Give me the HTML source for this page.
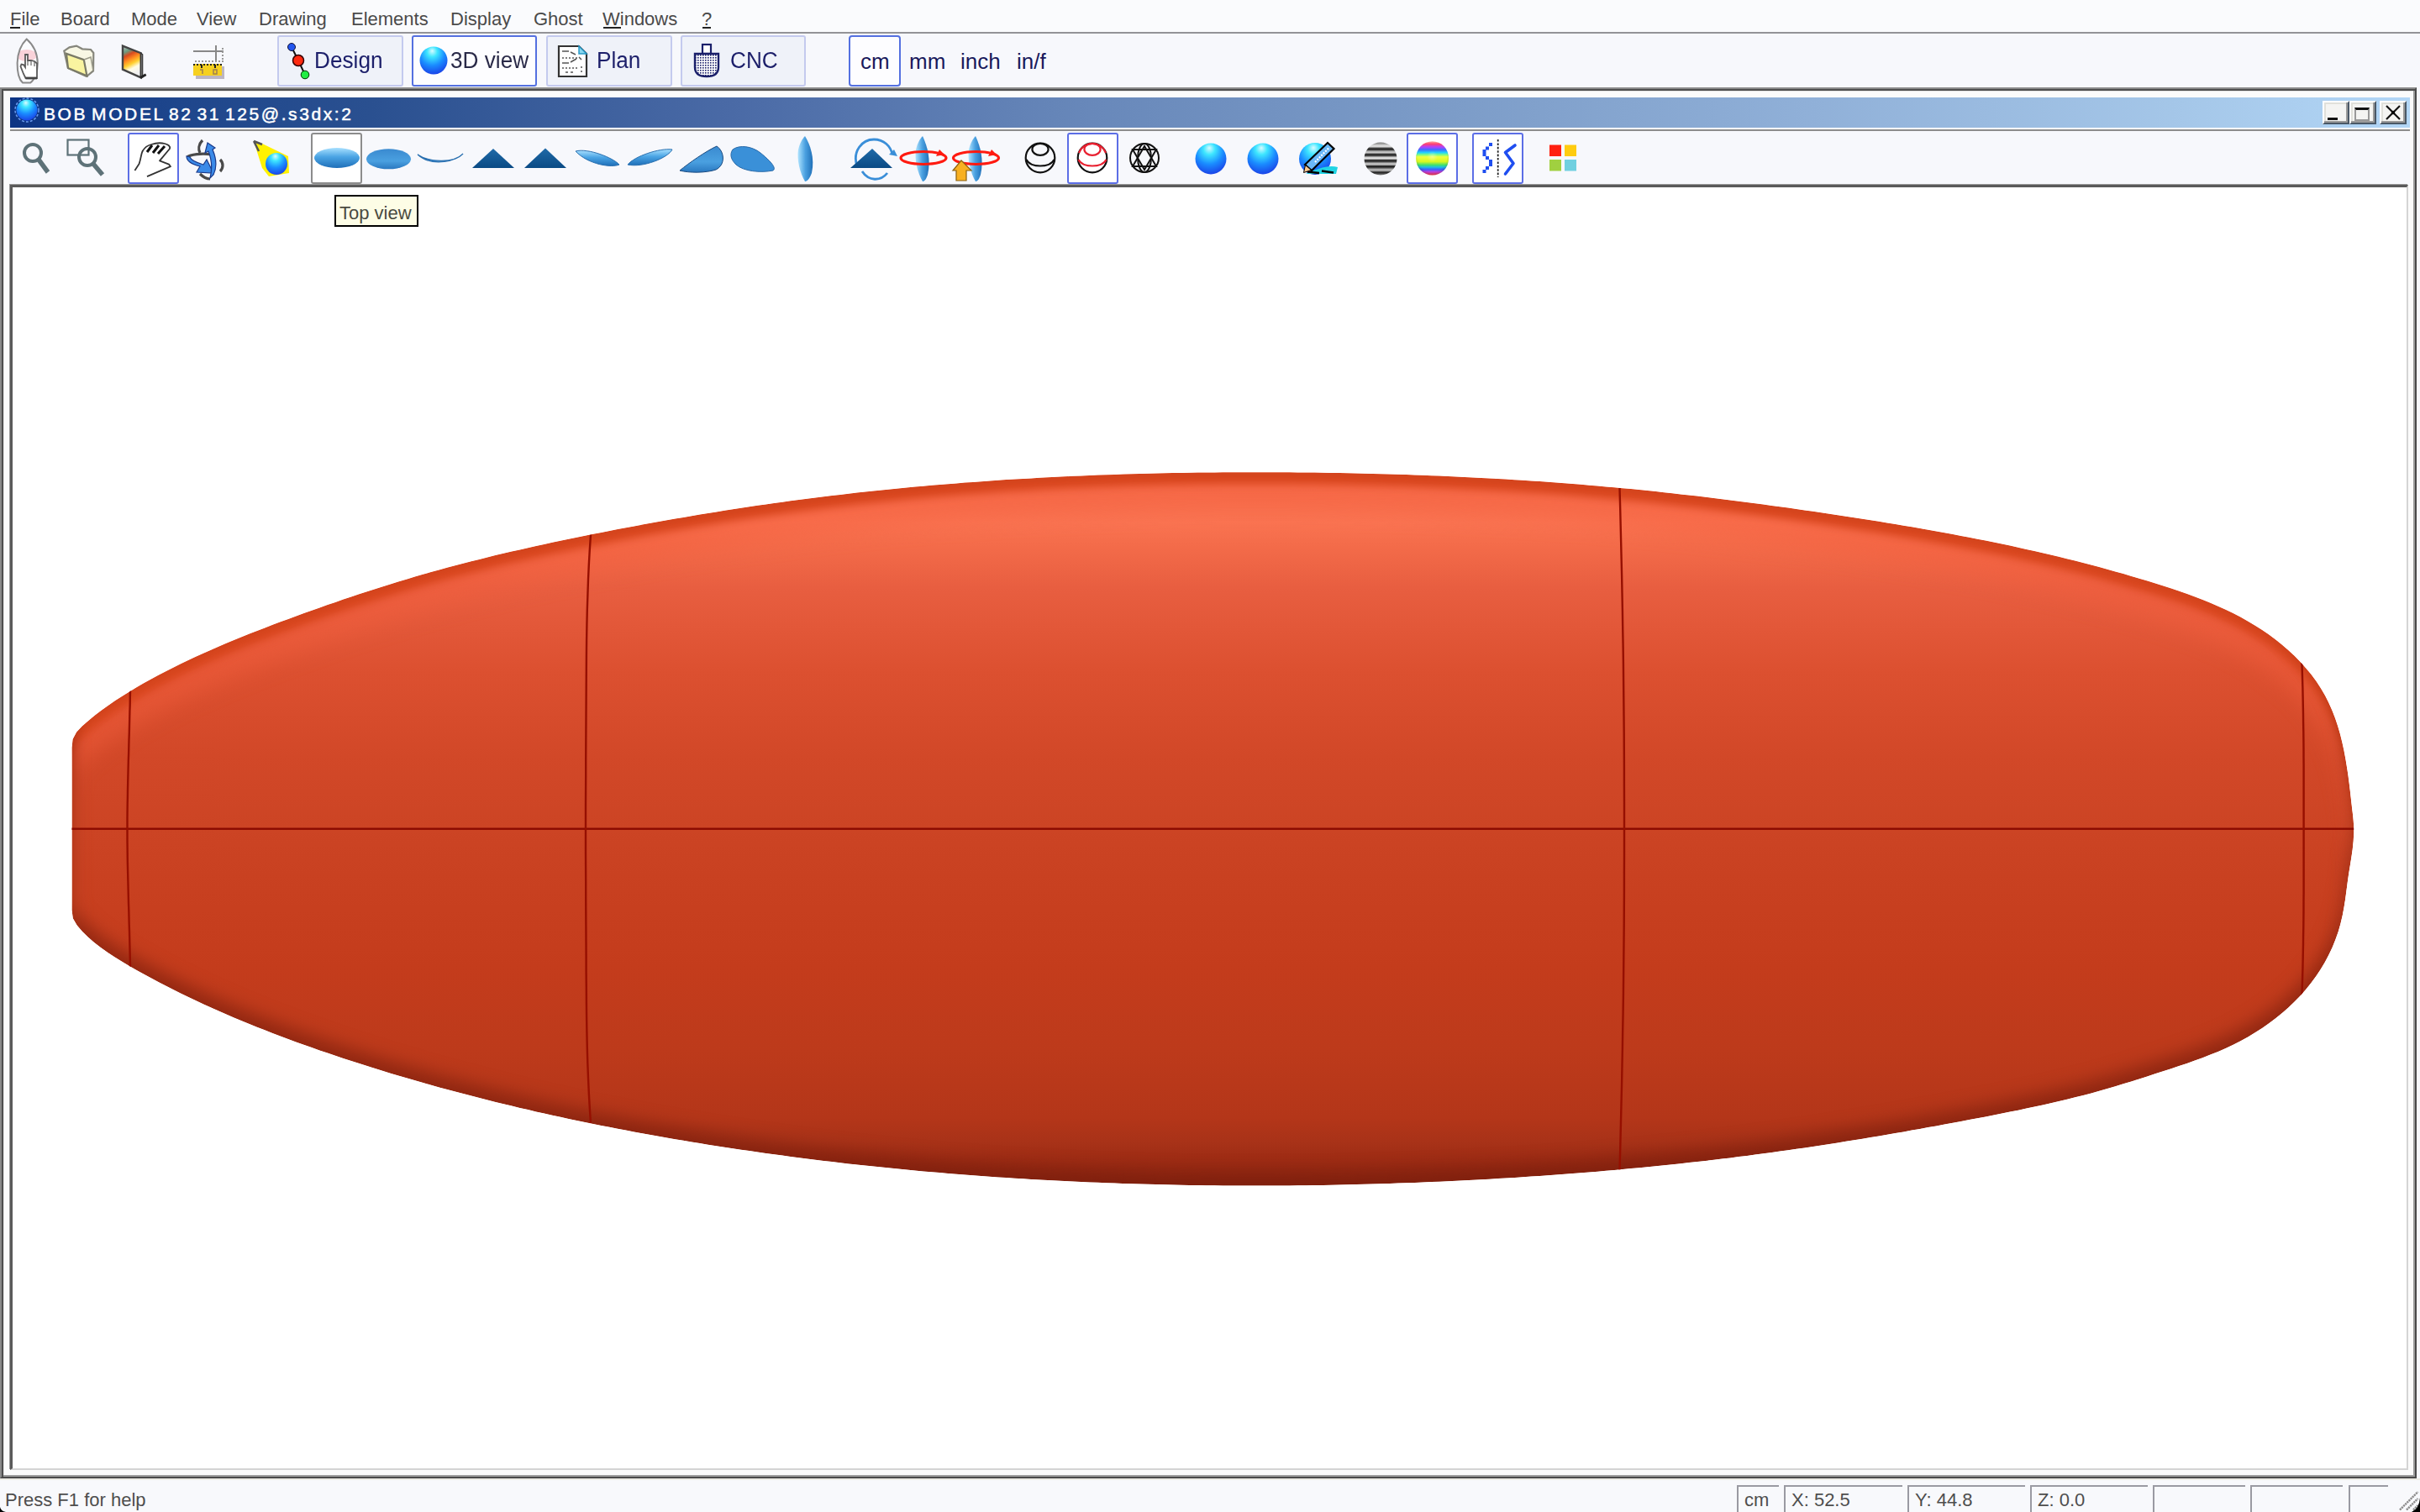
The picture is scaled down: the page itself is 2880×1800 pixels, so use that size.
<!DOCTYPE html>
<html><head><meta charset="utf-8"><style>
*{margin:0;padding:0;box-sizing:border-box}
html,body{width:2880px;height:1800px;overflow:hidden;background:#f7f8fc;font-family:"Liberation Sans",sans-serif;position:relative}
.a{position:absolute}
.t{position:absolute;white-space:nowrap;line-height:1}
</style></head>
<body>
<div class="a" style="left:0;top:0;width:2880px;height:38px;background:#fafbfd"></div>
<div class="a" style="left:0;top:38px;width:2880px;height:2px;background:#939397"></div>
<div class="t" style="left:12px;top:12px;font-size:22px;color:#4a4a4a">File</div>
<div class="t" style="left:72px;top:12px;font-size:22px;color:#4a4a4a">Board</div>
<div class="t" style="left:156px;top:12px;font-size:22px;color:#4a4a4a">Mode</div>
<div class="t" style="left:234px;top:12px;font-size:22px;color:#4a4a4a">View</div>
<div class="t" style="left:308px;top:12px;font-size:22px;color:#4a4a4a">Drawing</div>
<div class="t" style="left:418px;top:12px;font-size:22px;color:#4a4a4a">Elements</div>
<div class="t" style="left:536px;top:12px;font-size:22px;color:#4a4a4a">Display</div>
<div class="t" style="left:635px;top:12px;font-size:22px;color:#4a4a4a">Ghost</div>
<div class="t" style="left:717px;top:12px;font-size:22px;color:#4a4a4a">Windows</div>
<div class="t" style="left:835px;top:12px;font-size:22px;color:#4a4a4a">?</div>
<div class="a" style="left:12px;top:32px;width:12px;height:2px;background:#222"></div>
<div class="a" style="left:718px;top:32px;width:21px;height:2px;background:#222"></div>
<div class="a" style="left:836px;top:32px;width:10px;height:2px;background:#222"></div>
<div class="a" style="left:0;top:40px;width:2880px;height:64px;background:#f7f8fc"></div>
<svg class="a" style="left:12px;top:42px" width="42" height="62" viewBox="12 42 42 62">
<defs><clipPath id="bdc"><path d="M31.7 46.5 C26 52 21 62 20.6 75 C20.5 86 23 95 27 98.6 L36 98.6 C41 95 44.8 86 44.8 75 C44.5 62 38 52 31.7 46.5 Z"/></clipPath></defs>
<path d="M31.7 46.5 C26 52 21 62 20.6 75 C20.5 86 23 95 27 98.6 L36 98.6 C41 95 44.8 86 44.8 75 C44.5 62 38 52 31.7 46.5 Z" fill="#fbfcff"/>
<ellipse cx="31.7" cy="66" rx="12" ry="7" fill="#f8c4cc" opacity="0.75" clip-path="url(#bdc)"/>
<path d="M31.7 46.5 C26 52 21 62 20.6 75 C20.5 86 23 95 27 98.6 L36 98.6 C41 95 44.8 86 44.8 75 C44.5 62 38 52 31.7 46.5 Z" fill="none" stroke="#8a8a8a" stroke-width="2"/>
<path d="M30 65 L33 65 L33 72 L37 72 L41 73 L44 75.5 L44 93 L30.5 93 L28 88 L24.5 79 L25.5 76.5 L28 77 L30 80 Z" fill="#fff" stroke="#5a5a5a" stroke-width="1.8"/>
<path d="M30.5 93 L44 93" stroke="#444" stroke-width="2.8"/>
<path d="M33 72 L33 78 M37 72 L37 78 M41 73 L41 79" stroke="#666" stroke-width="1.2"/>
</svg>
<svg class="a" style="left:70px;top:48px" width="50" height="50" viewBox="0 0 50 50">
<path d="M6.3 12.6 L12.6 8.3 L21 6.6 L28 10.3 L38 11 L41.3 15 L41 36.4 L33 43 L11 33 Z" fill="#f8f7e4" stroke="#86867c" stroke-width="2.2"/>
<path d="M9 15.9 L29.8 23.1 L33.4 42.3 L11 33 Z" fill="#f9f4a0" stroke="#7a7a66" stroke-width="2.2"/>
<path d="M30 23 L38 20 L41 36" fill="none" stroke="#9a9a8a" stroke-width="1.5"/>
</svg>
<svg class="a" style="left:136px;top:48px" width="50" height="50" viewBox="0 0 50 50">
<defs><linearGradient id="fl" x1="0" y1="0" x2="0.3" y2="1"><stop offset="0" stop-color="#c8c8c8"/><stop offset="0.22" stop-color="#6a9a80"/><stop offset="0.35" stop-color="#d84a20"/><stop offset="0.5" stop-color="#ff8a20"/><stop offset="0.65" stop-color="#ffd030"/><stop offset="0.8" stop-color="#fffce8"/><stop offset="1" stop-color="#f0f0f0"/></linearGradient></defs>
<path d="M10 6.6 L31.7 15.2 L31.7 44.3 L10 34.7 Z" fill="url(#fl)" stroke="#444" stroke-width="2.4"/>
<path d="M31.7 15.2 L33.7 16.8 L33.7 44 L31.7 44.3Z" fill="#8a8a8a" stroke="#333" stroke-width="1.2"/>
<path d="M31 44.5 L37.7 40.7" stroke="#222" stroke-width="2.8"/>
</svg>
<svg class="a" style="left:226px;top:50px" width="46" height="48" viewBox="0 0 46 48">
<rect x="7" y="29" width="34" height="15" fill="#a8a0b0" opacity="0.75"/>
<rect x="4" y="26" width="34" height="14" fill="#f6d020"/>
<line x1="4" y1="11" x2="40" y2="11" stroke="#888" stroke-width="2"/>
<line x1="31" y1="4" x2="31" y2="23" stroke="#888" stroke-width="2"/>
<line x1="6" y1="23" x2="40" y2="23" stroke="#999" stroke-width="2" stroke-dasharray="2 2"/>
<line x1="39" y1="7" x2="39" y2="23" stroke="#999" stroke-width="2" stroke-dasharray="2 2"/>
<line x1="4" y1="27" x2="38" y2="27" stroke="#222" stroke-width="2" stroke-dasharray="2 2"/>
<rect x="13" y="27" width="2" height="4" fill="#222"/><rect x="29" y="27" width="2" height="4" fill="#222"/>
<path d="M12 33 h3 v5" fill="none" stroke="#a08050" stroke-width="1.5"/>
<rect x="28" y="33" width="4" height="5" fill="none" stroke="#a08050" stroke-width="1.5"/>
</svg>
<div class="a" style="left:330px;top:42px;width:150px;height:61px;border:2px solid #c4caee;border-radius:3px;background:#eff2f9"></div>
<div class="a" style="left:490px;top:42px;width:149px;height:61px;border:2px solid #5470e0;border-radius:3px;background:#fdfdff"></div>
<div class="a" style="left:650px;top:42px;width:150px;height:61px;border:2px solid #c4caee;border-radius:3px;background:#eff2f9"></div>
<div class="a" style="left:810px;top:42px;width:149px;height:61px;border:2px solid #c4caee;border-radius:3px;background:#eff2f9"></div>
<svg class="a" style="left:338px;top:48px" width="34" height="50" viewBox="0 0 34 50">
<path d="M9 8 L17 24 L25 41" fill="none" stroke="#111" stroke-width="2"/>
<circle cx="9" cy="8" r="4.5" fill="#2255ee" stroke="#113" stroke-width="1"/>
<circle cx="17" cy="24" r="6.5" fill="#ff2a10" stroke="#300" stroke-width="1.5"/>
<circle cx="25" cy="41" r="4.8" fill="#22ee44" stroke="#030" stroke-width="1"/>
</svg>
<div class="t" style="left:374px;top:59px;font-size:27px;color:#1c1f6a;transform-origin:0 0;transform:scaleX(0.97)">Design</div>
<svg class="a" style="left:498px;top:54px" width="36" height="36" viewBox="0 0 36 36"><defs><radialGradient id="s3d" cx="0.45" cy="0.28" r="0.75" fx="0.45" fy="0.15"><stop offset="0" stop-color="#d8fbff"/><stop offset="0.25" stop-color="#3ee6ff"/><stop offset="0.6" stop-color="#1a8cff"/><stop offset="1" stop-color="#1a3ee6"/></radialGradient></defs><circle cx="18" cy="18" r="16.5" fill="url(#s3d)"/></svg>
<div class="t" style="left:536px;top:59px;font-size:27px;color:#2a2a48;transform-origin:0 0;transform:scaleX(0.97)">3D view</div>
<svg class="a" style="left:662px;top:52px" width="40" height="42" viewBox="0 0 40 42">
<path d="M3 3 L27 3 L36 12 L36 39 L3 39 Z" fill="#fff" stroke="#333" stroke-width="2.2"/>
<path d="M27 3 L27 12 L36 12 Z" fill="#8ad8f0" stroke="#2a9ac8" stroke-width="1.5"/>
<path d="M7 9 h8 M17 10 l6 3 M7 17 h2 M11 17 h2 M15 17 h2 M19 17 h2 M23 17 h2 M27 16 l3 3 M7 23 h8 M17 22 l7 -4 M7 29 h2 M11 29 h2 M15 29 h2 M19 29 h2 M23 29 h2 M29 28 h2 M11 34 h3 M17 34 h3 M29 33 h2" stroke="#555" stroke-width="1.5" fill="none"/>
</svg>
<div class="t" style="left:710px;top:59px;font-size:27px;color:#1c1f6a;transform-origin:0 0;transform:scaleX(0.97)">Plan</div>
<svg class="a" style="left:824px;top:50px" width="34" height="44" viewBox="0 0 34 44">
<defs><pattern id="dots" width="3" height="3" patternUnits="userSpaceOnUse"><rect width="3" height="3" fill="#fff"/><rect width="1.6" height="1.6" fill="#1a1f6a"/></pattern></defs>
<rect x="12" y="3" width="10" height="11" fill="#fff" stroke="#1a1f6a" stroke-width="2.2"/>
<path d="M3 14 L31 14 L31 30 C31 38 26 41 17 41 C8 41 3 38 3 30 Z" fill="url(#dots)" stroke="#1a1f6a" stroke-width="2.4"/>
</svg>
<div class="t" style="left:869px;top:59px;font-size:27px;color:#1c1f6a;transform-origin:0 0;transform:scaleX(0.97)">CNC</div>
<div class="a" style="left:1010px;top:42px;width:62px;height:61px;border:2px solid #5470e0;border-radius:4px;background:#fdfdff"></div>
<div class="t" style="left:1024px;top:60px;font-size:26px;color:#1a1a5c">cm</div>
<div class="t" style="left:1082px;top:60px;font-size:26px;color:#1a1a5c">mm</div>
<div class="t" style="left:1143px;top:60px;font-size:26px;color:#1a1a5c">inch</div>
<div class="t" style="left:1210px;top:60px;font-size:26px;color:#1a1a5c">in/f</div>
<div class="a" style="left:0;top:104px;width:2876px;height:1656px;background:#fbfbfb;border:2px solid;border-color:#8a8a8a #4a4a4a #4a4a4a #8a8a8a;box-shadow:inset 2px 2px 0 #4e4e4e, inset -2px -2px 0 #9c9c9c, inset 3px 3px 0 #e6e6e6"></div>
<div class="a" style="left:12px;top:116px;width:2856px;height:36px;background:linear-gradient(90deg,#0c3484 0%,#1e468c 7%,#2a5090 15%,#4a6aa6 30%,#6888ba 45%,#7c9cc8 60%,#90b0d8 75%,#a4c6e8 90%,#b2d6f6 100%)"></div>
<div class="a" style="left:12px;top:154px;width:2856px;height:2px;background:#8c8c8c"></div>
<div class="a" style="left:12px;top:156px;width:2856px;height:64px;background:#f7f8fc"></div>
<div class="t" style="left:52px;top:125px;font-size:21px;color:#fff;letter-spacing:2.6px;word-spacing:-3.5px;-webkit-text-stroke:0.5px #fff">BOB MODEL 82 31 125@.s3dx:2</div>
<svg class="a" style="left:16px;top:116px" width="32" height="32" viewBox="0 0 32 32"><defs><radialGradient id="stt" cx="0.45" cy="0.28" r="0.75" fx="0.45" fy="0.15"><stop offset="0" stop-color="#d8fbff"/><stop offset="0.25" stop-color="#3ee6ff"/><stop offset="0.6" stop-color="#1a8cff"/><stop offset="1" stop-color="#1a3ee6"/></radialGradient></defs><circle cx="16" cy="15" r="14" fill="none" stroke="#6a9cf0" stroke-width="1.5" stroke-dasharray="3 2"/><circle cx="16" cy="15" r="12.5" fill="url(#stt)"/></svg>
<div class="a" style="left:2764px;top:120px;width:32px;height:28px;background:#f4f4f2;border-top:2px solid #fff;border-left:2px solid #fff;border-right:2px solid #4a5866;border-bottom:2px solid #4a5866;box-shadow:inset -2px -2px 0 #9a9a9a, inset 2px 2px 0 #e0e0da"></div>
<div class="a" style="left:2796px;top:120px;width:32px;height:28px;background:#f4f4f2;border-top:2px solid #fff;border-left:2px solid #fff;border-right:2px solid #4a5866;border-bottom:2px solid #4a5866;box-shadow:inset -2px -2px 0 #9a9a9a, inset 2px 2px 0 #e0e0da"></div>
<div class="a" style="left:2832px;top:120px;width:32px;height:28px;background:#f4f4f2;border-top:2px solid #fff;border-left:2px solid #fff;border-right:2px solid #4a5866;border-bottom:2px solid #4a5866;box-shadow:inset -2px -2px 0 #9a9a9a, inset 2px 2px 0 #e0e0da"></div>
<div class="a" style="left:2770px;top:140px;width:12px;height:2.5px;background:#111"></div>
<div class="a" style="left:2802px;top:128px;width:18px;height:16px;border:2px solid #999;border-top:3px solid #111"></div>
<svg class="a" style="left:2838px;top:124px" width="20" height="20" viewBox="0 0 20 20"><path d="M2 2 L18 18 M18 2 L2 18" stroke="#111" stroke-width="2.2"/><circle cx="10" cy="10" r="2.2" fill="#000"/></svg>
<div class="a" style="left:152px;top:158px;width:61px;height:61px;border:2px solid #5c6ee6;border-radius:3px;background:#fff"></div>
<div class="a" style="left:370px;top:158px;width:61px;height:61px;border:2px solid #8c8c8c;border-radius:3px;background:#fff"></div>
<div class="a" style="left:1270px;top:158px;width:61px;height:61px;border:2px solid #5c6ee6;border-radius:3px;background:#fff"></div>
<div class="a" style="left:1674px;top:158px;width:61px;height:61px;border:2px solid #5c6ee6;border-radius:3px;background:#fff"></div>
<div class="a" style="left:1752px;top:158px;width:61px;height:61px;border:2px solid #5c6ee6;border-radius:3px;background:#fff"></div>
<svg class="a" style="left:24px;top:168px" width="40" height="44" viewBox="0 0 40 44"><circle cx="15" cy="14" r="10" fill="none" stroke="#5e7278" stroke-width="4"/><path d="M22 22 L33 37" stroke="#5e7278" stroke-width="5.5" stroke-linecap="butt"/></svg>
<svg class="a" style="left:76px;top:162px" width="52" height="52" viewBox="0 0 52 52"><rect x="4.5" y="4.5" width="25" height="18" fill="none" stroke="#5e7278" stroke-width="2.2"/><circle cx="28" cy="25" r="10" fill="none" stroke="#5e7278" stroke-width="4"/><path d="M35 33 L46 46" stroke="#5e7278" stroke-width="5.5"/></svg>
<svg class="a" style="left:150px;top:156px" width="126" height="64" viewBox="150 156 126 64"><path d="M160.4 202.9 L165.6 195 C168 188 168 182 170 179.4 C172 176 176 173 180 172 C186 170 192 170 196 171 C200 172 203 174 202 177 L190 191.4 L201 195.6 L203 198.2 L175 210.2" fill="#fff" stroke="#333" stroke-width="1.8" stroke-linejoin="round"/><path d="M175 181 L181 173 M182 182 L189 173 M188 183 L196 174" stroke="#111" stroke-width="3"/></svg>
<svg class="a" style="left:216px;top:160px" width="60" height="60" viewBox="216 160 60 60"><g fill="none" stroke="#4a4a4a" stroke-width="3.2"><path d="M241 167 C236 172 236 178 238 182"/><path d="M223 187 C226 184 240 182 252 184"/><path d="M238 207 C242 211 246 213 250 213"/><path d="M262 190 C266 194 266 200 262 204"/></g><path d="M222 186 C222 193 230 196 238 198 L234 205 L254 206 L246 190 L242 196 C236 194 228 192 226 187 Z" fill="#3a8ae8" stroke="#1a3a8a" stroke-width="1.2"/><path d="M247 170 L256 176 L253 178 C258 190 258 200 254 208 L250 212 C253 200 252 190 248 180 L244 182 Z" fill="#3a8ae8" stroke="#1a3a8a" stroke-width="1.2"/></svg>
<svg class="a" style="left:298px;top:164px" width="50" height="50" viewBox="0 0 50 50"><defs><radialGradient id="slt" cx="0.45" cy="0.28" r="0.75" fx="0.45" fy="0.15"><stop offset="0" stop-color="#d8fbff"/><stop offset="0.25" stop-color="#3ee6ff"/><stop offset="0.6" stop-color="#1a8cff"/><stop offset="1" stop-color="#1a3ee6"/></radialGradient></defs><path d="M4 4 L12 6 L45 22 L46 42 L22 46 L14 36 Z" fill="#fff200"/><path d="M4 4 L10 16 M4 4 L14 8" stroke="#555" stroke-width="2.5"/><circle cx="31" cy="31" r="13" fill="url(#slt)"/></svg>
<svg class="a" style="left:360px;top:160px" width="640" height="60" viewBox="360 160 640 60"><defs><linearGradient id="bl1" x1="0" y1="0" x2="0" y2="1"><stop offset="0" stop-color="#a8e0ff"/><stop offset="0.45" stop-color="#4aa4e4"/><stop offset="1" stop-color="#1f6fb8"/></linearGradient><linearGradient id="bl2" x1="0" y1="0" x2="0" y2="1"><stop offset="0" stop-color="#3a8ad0"/><stop offset="0.6" stop-color="#4aa0e0"/><stop offset="1" stop-color="#2a78c0"/></linearGradient><linearGradient id="bld" x1="0" y1="0" x2="0" y2="1"><stop offset="0" stop-color="#1f6aa8"/><stop offset="1" stop-color="#0a4a84"/></linearGradient><linearGradient id="blv" x1="0" y1="0" x2="1" y2="0"><stop offset="0" stop-color="#b0e4ff"/><stop offset="0.5" stop-color="#4aa0e0"/><stop offset="1" stop-color="#2070b8"/></linearGradient></defs>
<ellipse cx="401" cy="188" rx="27" ry="12" fill="url(#bl1)"/>
<ellipse cx="462.5" cy="189.3" rx="26.5" ry="12" fill="url(#bl2)"/>
<path d="M497 184 C510 193 540 195 551 183 C545 191 515 200 497 184Z" fill="#3a8ad0" stroke="#2a70b0" stroke-width="1.2"/>
<path d="M562 200 L587 177 L612 200 Z" fill="url(#bld)"/>
<path d="M624 200 L649 176.5 L674 200 Z" fill="url(#bld)"/>
<path d="M685 180 C700 176 730 188 737 196 C728 200 700 196 685 180Z" fill="url(#bl1)" stroke="#2a70b0" stroke-width="1"/>
<path d="M747 196 C755 186 785 176 800 178 C795 188 765 200 747 196Z" fill="url(#bl1)" stroke="#2a70b0" stroke-width="1"/>
<path d="M809 203 C820 194 840 180 853 174 C862 180 864 196 852 202 C840 206 820 206 809 203Z" fill="url(#bl2)" stroke="#1a4a80" stroke-width="1"/>
<path d="M872 178 C880 172 895 174 905 182 C915 190 925 200 920 203 C905 206 885 204 876 196 C870 190 868 184 872 178Z" fill="#3a90d8" stroke="#2a6aa8" stroke-width="1"/>
<path d="M958 162 C964 172 970 188 966 206 C963 214 960 216 958 216 C952 206 948 190 950 178 C952 170 955 165 958 162Z" fill="url(#blv)"/>
</svg>
<svg class="a" style="left:1000px;top:160px" width="340" height="60" viewBox="1000 160 340 60"><defs><linearGradient id="bld2" x1="0" y1="0" x2="0" y2="1"><stop offset="0" stop-color="#1f6aa8"/><stop offset="1" stop-color="#0a4a84"/></linearGradient><linearGradient id="blv2" x1="0" y1="0" x2="1" y2="0"><stop offset="0" stop-color="#b0e4ff"/><stop offset="0.5" stop-color="#4aa0e0"/><stop offset="1" stop-color="#2070b8"/></linearGradient></defs>
<path d="M1020 198 C1014 180 1026 166 1040 166 C1052 166 1060 174 1062 184" fill="none" stroke="#3a8ed8" stroke-width="2.8"/>
<path d="M1058 184 L1064 178 L1068 186Z" fill="#3a8ed8"/>
<path d="M1026 204 C1034 216 1048 216 1056 206" fill="none" stroke="#3a8ed8" stroke-width="2.8"/>
<path d="M1012 200 L1038 177 L1062 200 Z" fill="url(#bld2)"/>
<path d="M1098 162 C1104 175 1108 190 1104 208 C1102 214 1100 216 1098 216 C1092 206 1088 190 1090 178 C1092 170 1095 165 1098 162Z" fill="url(#blv2)"/>
<ellipse cx="1099" cy="188" rx="27" ry="7.5" fill="none" stroke="#ff1a10" stroke-width="3.2"/>
<path d="M1118 178 L1124 184 L1114 186Z" fill="#ff1a10"/>
<path d="M1161 162 C1167 175 1171 190 1167 208 C1165 214 1163 216 1161 216 C1155 206 1151 190 1153 178 C1155 170 1158 165 1161 162Z" fill="url(#blv2)"/>
<ellipse cx="1161.5" cy="188" rx="27" ry="7.5" fill="none" stroke="#ff1a10" stroke-width="3.2"/>
<path d="M1180 178 L1186 184 L1176 186Z" fill="#ff1a10"/>
<path d="M1144 191 L1156 203 L1150 203 L1150 215 L1138 215 L1138 203 L1134 203Z" fill="#f8b020" stroke="#8a6010" stroke-width="1.2"/>
<g fill="none" stroke="#111" stroke-width="2.2"><circle cx="1238" cy="188" r="17.3"/><ellipse cx="1238" cy="177.8" rx="9.6" ry="7"/><path d="M1221.5 190 C1226 200 1250 200 1254.5 190"/></g>
<g fill="none" stroke-width="2.2"><circle cx="1300" cy="188" r="17.3" stroke="#111"/><path d="M1284 182 C1288 173 1294 171 1300 171 C1306 171 1312 173 1316 182" stroke="#e82030"/><ellipse cx="1300" cy="177.8" rx="9.6" ry="7" stroke="#e82030"/><path d="M1283.5 190 C1288 200 1312 200 1316.5 190" stroke="#e82030"/></g>
</svg>
<svg class="a" style="left:1330px;top:160px" width="560" height="60" viewBox="1330 160 560 60"><defs><radialGradient id="sb1" cx="0.45" cy="0.28" r="0.75" fx="0.45" fy="0.15"><stop offset="0" stop-color="#d8fbff"/><stop offset="0.25" stop-color="#3ee6ff"/><stop offset="0.6" stop-color="#1a8cff"/><stop offset="1" stop-color="#1a3ee6"/></radialGradient><linearGradient id="stripe" x1="0" y1="0" x2="0" y2="1"><stop offset="0" stop-color="#777"/><stop offset="0.12" stop-color="#eee"/><stop offset="0.2" stop-color="#111"/><stop offset="0.3" stop-color="#ddd"/><stop offset="0.38" stop-color="#111"/><stop offset="0.48" stop-color="#fff"/><stop offset="0.56" stop-color="#111"/><stop offset="0.66" stop-color="#ddd"/><stop offset="0.74" stop-color="#111"/><stop offset="0.84" stop-color="#ccc"/><stop offset="0.92" stop-color="#222"/><stop offset="1" stop-color="#888"/></linearGradient><linearGradient id="rainbow" x1="0" y1="0" x2="0" y2="1"><stop offset="0" stop-color="#ffb0a0"/><stop offset="0.08" stop-color="#ff4070"/><stop offset="0.17" stop-color="#b040ff"/><stop offset="0.25" stop-color="#3a70ff"/><stop offset="0.33" stop-color="#20d0ff"/><stop offset="0.4" stop-color="#80ff80"/><stop offset="0.46" stop-color="#f0ff40"/><stop offset="0.6" stop-color="#d8f820"/><stop offset="0.7" stop-color="#40e070"/><stop offset="0.76" stop-color="#20c0e0"/><stop offset="0.83" stop-color="#3a60ff"/><stop offset="0.9" stop-color="#c040e0"/><stop offset="1" stop-color="#ff3a40"/></linearGradient><radialGradient id="rbshade" cx="0.5" cy="0.45" r="0.55"><stop offset="0" stop-color="#fff" stop-opacity="0.35"/><stop offset="0.3" stop-color="#fff" stop-opacity="0"/><stop offset="0.8" stop-color="#000" stop-opacity="0"/><stop offset="1" stop-color="#000" stop-opacity="0.15"/></radialGradient></defs>
<g fill="none" stroke="#111" stroke-width="2"><circle cx="1362" cy="188" r="17"/><path d="M1348 178 L1376 178 L1362 202 Z"/><path d="M1348 198 L1376 198 L1362 174 Z"/><ellipse cx="1362" cy="188" rx="8" ry="17"/></g>
<circle cx="1441" cy="189" r="18.5" fill="url(#sb1)"/>
<circle cx="1503" cy="189" r="18.5" fill="url(#sb1)"/>
<circle cx="1565" cy="189" r="19" fill="url(#sb1)"/>
<path d="M1554 207 C1568 201 1580 196 1592 199 L1590 207 Z" fill="#20d4e4"/>
<path d="M1556 204.5 L1570 206 M1573 203.5 L1587 205.5" stroke="#000" stroke-width="2.6"/>
<path d="M1553 196 L1580 170 L1587.5 177 L1561 203 Z" fill="#6ab8f8" stroke="#000" stroke-width="2.2"/>
<path d="M1565 193 L1582 175.5" stroke="#fff" stroke-width="2.2" stroke-dasharray="2 1.5"/>
<path d="M1553.5 196.5 L1560.5 202.5 L1551.5 205.5Z" fill="#ffc890" stroke="#000" stroke-width="1"/>
<circle cx="1643" cy="189" r="19.5" fill="url(#stripe)"/>
<ellipse cx="1704.6" cy="188.4" rx="19.5" ry="20.2" fill="url(#rainbow)"/><ellipse cx="1704.6" cy="188.4" rx="19.5" ry="20.2" fill="url(#rbshade)"/>
<g fill="#1f4ef0"><rect x="1772" y="170" width="4" height="4"/><rect x="1768" y="174.5" width="4" height="4"/><rect x="1764.5" y="178" width="4" height="8"/><rect x="1768" y="186" width="4" height="4"/><rect x="1772" y="190" width="4" height="8"/><rect x="1768" y="198" width="4" height="4"/><rect x="1764.5" y="202" width="4" height="4"/></g>
<path d="M1803 173 L1791.5 181.5 L1801 194.5 L1791.5 207" fill="none" stroke="#1f4ef0" stroke-width="3.6" stroke-linejoin="round" stroke-linecap="round"/>
<line x1="1782.7" y1="166" x2="1782.7" y2="211" stroke="#222" stroke-width="1.8" stroke-dasharray="2.6 1.8"/>
<rect x="1844" y="172.5" width="14" height="13.5" fill="#ff2010"/><rect x="1862" y="172.5" width="14" height="13.5" fill="#ffcc10"/>
<rect x="1844" y="190" width="14" height="13.5" fill="#a0d040"/><rect x="1862" y="190" width="14" height="13.5" fill="#70d0e0"/>
</svg>
<div class="a" style="left:12px;top:220px;width:2854px;height:1530px;background:#fff;border-top:3.5px solid #5a5a5a;border-left:3.5px solid #5a5a5a;border-right:2px solid #d4d4d4;border-bottom:2px solid #d4d4d4;box-shadow:-1px -1px 0 #999"></div>
<svg class="a" style="left:0;top:0" width="2880" height="1800" viewBox="0 0 2880 1800">
<defs>
<linearGradient id="bg" x1="0" y1="562" x2="0" y2="1411" gradientUnits="userSpaceOnUse">
<stop offset="0" stop-color="#f66e4c"/>
<stop offset="0.07" stop-color="#fa7452"/>
<stop offset="0.1" stop-color="#f46c4a"/>
<stop offset="0.162" stop-color="#e85e40"/>
<stop offset="0.28" stop-color="#dc5030"/>
<stop offset="0.398" stop-color="#d24828"/>
<stop offset="0.5" stop-color="#cc4424"/>
<stop offset="0.586" stop-color="#c84020"/>
<stop offset="0.692" stop-color="#c43c1c"/>
<stop offset="0.81" stop-color="#bd3a1b"/>
<stop offset="0.905" stop-color="#b43619"/>
<stop offset="0.94" stop-color="#a83218"/>
<stop offset="0.963" stop-color="#9e2c14"/>
<stop offset="1" stop-color="#8a2410"/>
</linearGradient>
<filter id="shade" x="-2%" y="-10%" width="104%" height="120%" color-interpolation-filters="sRGB">
<feOffset in="SourceAlpha" dy="45" result="o1"/>
<feGaussianBlur in="o1" stdDeviation="12" result="b1"/>
<feComposite in="SourceAlpha" in2="b1" operator="arithmetic" k2="1" k3="-1" result="band1"/>
<feFlood flood-color="#f4603e" flood-opacity="0.45"/>
<feComposite in2="band1" operator="in" result="hl"/>
<feOffset in="SourceAlpha" dy="14" result="o2"/>
<feGaussianBlur in="o2" stdDeviation="5" result="b2"/>
<feComposite in="SourceAlpha" in2="b2" operator="arithmetic" k2="1" k3="-1" result="band2"/>
<feFlood flood-color="#d8461e" flood-opacity="1"/>
<feComposite in2="band2" operator="in" result="rim"/>
<feOffset in="SourceAlpha" dy="-14" result="o3"/>
<feGaussianBlur in="o3" stdDeviation="10" result="b3"/>
<feComposite in="SourceAlpha" in2="b3" operator="arithmetic" k2="1" k3="-1" result="band3"/>
<feFlood flood-color="#7a1e0c" flood-opacity="0.65"/>
<feComposite in2="band3" operator="in" result="dk"/>
<feMerge><feMergeNode in="SourceGraphic"/><feMergeNode in="hl"/><feMergeNode in="rim"/><feMergeNode in="dk"/></feMerge>
</filter>
<clipPath id="bclip"><path d="M85.5 890.0 L86.6 879.9 L91.1 871.6 L97.7 864.4 L105.2 857.9 L113.0 851.6 L120.9 845.6 L129.0 839.8 L137.2 834.1 L145.5 828.7 L154.0 823.4 L162.5 818.3 L171.1 813.3 L179.8 808.5 L188.5 803.8 L197.3 799.2 L206.2 794.7 L215.1 790.3 L224.0 786.0 L233.0 781.8 L242.0 777.7 L251.1 773.7 L260.1 769.7 L269.3 765.8 L278.4 762.0 L287.6 758.3 L296.8 754.6 L306.0 751.0 L315.2 747.4 L324.5 743.8 L333.8 740.3 L343.1 736.9 L352.4 733.5 L361.7 730.1 L371.1 726.7 L380.4 723.4 L389.8 720.1 L399.2 716.9 L408.6 713.6 L418.0 710.5 L427.4 707.3 L436.9 704.2 L446.3 701.2 L455.8 698.2 L465.3 695.2 L474.8 692.3 L484.3 689.4 L493.8 686.6 L503.3 683.8 L512.9 681.1 L522.4 678.5 L532.0 675.8 L541.6 673.3 L551.2 670.8 L560.8 668.3 L570.4 665.9 L580.0 663.5 L589.6 661.1 L599.3 658.8 L608.9 656.6 L618.6 654.4 L628.3 652.2 L638.0 650.0 L647.6 647.9 L657.3 645.8 L667.0 643.8 L676.7 641.7 L686.5 639.7 L696.2 637.8 L705.9 635.8 L715.6 633.9 L725.4 632.0 L735.1 630.1 L744.9 628.2 L754.6 626.4 L764.4 624.6 L774.2 622.8 L783.9 621.0 L793.7 619.3 L803.5 617.6 L813.3 615.9 L823.1 614.2 L832.9 612.6 L842.6 611.0 L852.4 609.4 L862.3 607.8 L872.1 606.3 L881.9 604.8 L891.7 603.3 L901.5 601.8 L911.3 600.4 L921.2 599.0 L931.0 597.7 L940.8 596.3 L950.7 595.0 L960.5 593.7 L970.4 592.5 L980.2 591.2 L990.1 590.0 L999.9 588.9 L1009.8 587.7 L1019.6 586.6 L1029.5 585.5 L1039.3 584.5 L1049.2 583.5 L1059.1 582.4 L1069.0 581.5 L1078.8 580.5 L1088.7 579.6 L1098.6 578.7 L1108.5 577.8 L1118.3 577.0 L1128.2 576.2 L1138.1 575.4 L1148.0 574.6 L1157.9 573.9 L1167.8 573.2 L1177.7 572.5 L1187.6 571.8 L1197.5 571.1 L1207.4 570.5 L1217.3 569.9 L1227.2 569.4 L1237.1 568.8 L1247.0 568.3 L1256.9 567.8 L1266.8 567.3 L1276.7 566.8 L1286.6 566.4 L1296.5 566.0 L1306.5 565.6 L1316.4 565.2 L1326.3 564.9 L1336.2 564.6 L1346.1 564.3 L1356.1 564.0 L1366.0 563.7 L1375.9 563.5 L1385.8 563.3 L1395.7 563.1 L1405.7 562.9 L1415.6 562.7 L1425.5 562.6 L1435.4 562.5 L1445.4 562.4 L1455.3 562.3 L1465.2 562.2 L1475.1 562.2 L1485.1 562.2 L1495.0 562.2 L1504.9 562.2 L1514.8 562.2 L1524.8 562.3 L1534.7 562.3 L1544.6 562.4 L1554.5 562.5 L1564.5 562.6 L1574.4 562.8 L1584.3 562.9 L1594.2 563.1 L1604.2 563.3 L1614.1 563.5 L1624.0 563.7 L1633.9 563.9 L1643.9 564.2 L1653.8 564.5 L1663.7 564.8 L1673.6 565.1 L1683.5 565.4 L1693.5 565.8 L1703.4 566.2 L1713.3 566.6 L1723.2 567.0 L1733.1 567.5 L1743.0 567.9 L1752.9 568.4 L1762.8 568.9 L1772.8 569.4 L1782.7 570.0 L1792.6 570.6 L1802.5 571.2 L1812.4 571.8 L1822.3 572.4 L1832.2 573.1 L1842.1 573.8 L1852.0 574.5 L1861.9 575.3 L1871.7 576.0 L1881.6 576.8 L1891.5 577.7 L1901.4 578.5 L1911.3 579.4 L1921.2 580.3 L1931.0 581.2 L1940.9 582.1 L1950.8 583.1 L1960.7 584.1 L1970.5 585.1 L1980.4 586.2 L1990.3 587.3 L2000.1 588.4 L2010.0 589.5 L2019.8 590.6 L2029.7 591.8 L2039.5 593.0 L2049.4 594.2 L2059.2 595.4 L2069.1 596.7 L2078.9 598.0 L2088.8 599.2 L2098.6 600.6 L2108.4 601.9 L2118.3 603.2 L2128.1 604.6 L2137.9 606.0 L2147.8 607.4 L2157.6 608.8 L2167.4 610.3 L2177.2 611.7 L2187.0 613.2 L2196.8 614.7 L2206.7 616.2 L2216.5 617.7 L2226.3 619.3 L2236.1 620.8 L2245.9 622.4 L2255.7 624.0 L2265.4 625.7 L2275.2 627.3 L2285.0 629.0 L2294.8 630.7 L2304.5 632.5 L2314.3 634.2 L2324.0 636.0 L2333.8 637.9 L2343.5 639.8 L2353.3 641.7 L2363.0 643.6 L2372.7 645.6 L2382.4 647.6 L2392.1 649.6 L2401.8 651.7 L2411.5 653.9 L2421.2 656.1 L2430.8 658.3 L2440.5 660.5 L2450.1 662.8 L2459.8 665.2 L2469.4 667.6 L2479.0 670.1 L2488.6 672.6 L2498.2 675.1 L2507.8 677.7 L2517.4 680.4 L2527.0 683.1 L2536.5 685.9 L2546.0 688.7 L2555.6 691.6 L2565.1 694.5 L2574.6 697.5 L2584.0 700.6 L2593.5 703.8 L2602.9 707.1 L2612.2 710.5 L2621.4 714.1 L2630.6 717.8 L2639.7 721.7 L2648.7 725.8 L2657.6 730.1 L2666.3 734.6 L2675.0 739.4 L2683.4 744.4 L2691.8 749.7 L2699.9 755.3 L2707.9 761.2 L2715.7 767.4 L2723.2 773.9 L2730.6 780.8 L2737.6 787.9 L2744.3 795.4 L2750.6 803.1 L2756.5 811.1 L2762.0 819.4 L2767.0 827.9 L2771.4 836.7 L2775.4 845.7 L2779.0 854.9 L2782.1 864.3 L2784.9 873.8 L2787.3 883.4 L2789.4 893.1 L2791.3 902.9 L2792.9 912.7 L2794.4 922.5 L2795.7 932.4 L2796.9 942.3 L2798.0 952.2 L2799.1 962.0 L2800.3 971.9 L2801.1 981.8 L2801.3 991.6 L2800.7 1001.5 L2799.7 1011.3 L2798.3 1021.1 L2796.7 1031.0 L2795.1 1040.8 L2793.7 1050.7 L2792.4 1060.7 L2791.1 1070.5 L2789.5 1080.4 L2787.7 1090.1 L2785.4 1099.7 L2782.7 1109.2 L2779.4 1118.6 L2775.7 1127.7 L2771.4 1136.7 L2766.8 1145.4 L2761.7 1153.9 L2756.2 1162.2 L2750.3 1170.2 L2744.1 1177.9 L2737.5 1185.4 L2730.6 1192.5 L2723.4 1199.4 L2715.9 1206.0 L2708.2 1212.3 L2700.2 1218.3 L2692.1 1223.9 L2683.7 1229.3 L2675.2 1234.4 L2666.5 1239.2 L2657.7 1243.7 L2648.7 1247.9 L2639.7 1251.9 L2630.5 1255.6 L2621.3 1259.2 L2612.0 1262.6 L2602.6 1265.9 L2593.2 1269.1 L2583.8 1272.2 L2574.3 1275.3 L2564.8 1278.3 L2555.3 1281.4 L2545.9 1284.4 L2536.4 1287.4 L2526.9 1290.3 L2517.4 1293.2 L2507.9 1296.0 L2498.3 1298.7 L2488.8 1301.4 L2479.2 1303.9 L2469.6 1306.3 L2460.0 1308.7 L2450.3 1311.0 L2440.7 1313.3 L2431.0 1315.4 L2421.3 1317.6 L2411.6 1319.6 L2401.9 1321.7 L2392.2 1323.6 L2382.5 1325.6 L2372.7 1327.5 L2363.0 1329.4 L2353.2 1331.3 L2343.5 1333.1 L2333.7 1335.0 L2324.0 1336.8 L2314.2 1338.6 L2304.4 1340.4 L2294.7 1342.1 L2284.9 1343.9 L2275.1 1345.6 L2265.4 1347.4 L2255.6 1349.1 L2245.8 1350.7 L2236.0 1352.4 L2226.2 1354.0 L2216.4 1355.7 L2206.6 1357.3 L2196.8 1358.8 L2187.0 1360.4 L2177.2 1361.9 L2167.4 1363.4 L2157.6 1364.9 L2147.8 1366.4 L2137.9 1367.8 L2128.1 1369.2 L2118.3 1370.6 L2108.5 1372.0 L2098.6 1373.3 L2088.8 1374.6 L2079.0 1375.9 L2069.1 1377.1 L2059.3 1378.4 L2049.4 1379.6 L2039.6 1380.7 L2029.7 1381.9 L2019.9 1383.0 L2010.0 1384.1 L2000.1 1385.2 L1990.3 1386.2 L1980.4 1387.3 L1970.6 1388.3 L1960.7 1389.3 L1950.8 1390.2 L1940.9 1391.1 L1931.1 1392.1 L1921.2 1392.9 L1911.3 1393.8 L1901.4 1394.7 L1891.5 1395.5 L1881.6 1396.3 L1871.7 1397.0 L1861.9 1397.8 L1852.0 1398.5 L1842.1 1399.3 L1832.2 1399.9 L1822.3 1400.6 L1812.4 1401.3 L1802.5 1401.9 L1792.6 1402.5 L1782.6 1403.1 L1772.7 1403.7 L1762.8 1404.2 L1752.9 1404.8 L1743.0 1405.3 L1733.1 1405.8 L1723.2 1406.2 L1713.3 1406.7 L1703.4 1407.1 L1693.4 1407.5 L1683.5 1407.9 L1673.6 1408.3 L1663.7 1408.6 L1653.8 1408.9 L1643.8 1409.3 L1633.9 1409.5 L1624.0 1409.8 L1614.1 1410.1 L1604.1 1410.3 L1594.2 1410.5 L1584.3 1410.7 L1574.4 1410.9 L1564.4 1411.0 L1554.5 1411.2 L1544.6 1411.3 L1534.7 1411.4 L1524.7 1411.4 L1514.8 1411.5 L1504.9 1411.5 L1495.0 1411.5 L1485.0 1411.5 L1475.1 1411.5 L1465.2 1411.4 L1455.3 1411.4 L1445.3 1411.3 L1435.4 1411.2 L1425.5 1411.1 L1415.6 1410.9 L1405.7 1410.7 L1395.7 1410.5 L1385.8 1410.3 L1375.9 1410.1 L1366.0 1409.8 L1356.1 1409.5 L1346.1 1409.2 L1336.2 1408.9 L1326.3 1408.6 L1316.4 1408.2 L1306.5 1407.8 L1296.6 1407.4 L1286.7 1407.0 L1276.7 1406.5 L1266.8 1406.1 L1256.9 1405.5 L1247.0 1405.0 L1237.1 1404.5 L1227.2 1403.9 L1217.3 1403.3 L1207.4 1402.7 L1197.5 1402.1 L1187.6 1401.4 L1177.7 1400.7 L1167.8 1400.0 L1157.9 1399.3 L1148.0 1398.5 L1138.2 1397.7 L1128.3 1396.9 L1118.4 1396.1 L1108.5 1395.3 L1098.6 1394.4 L1088.7 1393.5 L1078.9 1392.5 L1069.0 1391.6 L1059.1 1390.6 L1049.3 1389.6 L1039.4 1388.6 L1029.5 1387.5 L1019.7 1386.5 L1009.8 1385.4 L999.9 1384.2 L990.1 1383.1 L980.2 1381.9 L970.4 1380.7 L960.5 1379.5 L950.7 1378.2 L940.9 1376.9 L931.0 1375.6 L921.2 1374.3 L911.4 1372.9 L901.5 1371.5 L891.7 1370.1 L881.9 1368.7 L872.1 1367.2 L862.2 1365.7 L852.4 1364.2 L842.6 1362.7 L832.8 1361.1 L823.0 1359.5 L813.2 1357.8 L803.4 1356.2 L793.6 1354.5 L783.9 1352.8 L774.1 1351.0 L764.3 1349.2 L754.5 1347.4 L744.8 1345.6 L735.0 1343.7 L725.3 1341.8 L715.5 1339.9 L705.8 1338.0 L696.1 1336.0 L686.4 1333.9 L676.7 1331.9 L667.0 1329.8 L657.3 1327.7 L647.6 1325.5 L637.9 1323.4 L628.3 1321.1 L618.6 1318.9 L609.0 1316.6 L599.3 1314.3 L589.7 1311.9 L580.1 1309.5 L570.5 1307.1 L560.9 1304.6 L551.3 1302.1 L541.7 1299.6 L532.2 1297.0 L522.6 1294.4 L513.1 1291.8 L503.5 1289.1 L494.0 1286.3 L484.5 1283.6 L474.9 1280.8 L465.4 1277.9 L455.9 1275.0 L446.4 1272.1 L436.9 1269.1 L427.5 1266.1 L418.0 1263.1 L408.5 1260.0 L399.1 1256.8 L389.7 1253.6 L380.3 1250.4 L370.9 1247.1 L361.5 1243.7 L352.2 1240.4 L342.9 1236.9 L333.6 1233.4 L324.3 1229.9 L315.1 1226.3 L305.8 1222.7 L296.7 1219.0 L287.5 1215.2 L278.4 1211.4 L269.3 1207.5 L260.2 1203.6 L251.2 1199.5 L242.2 1195.5 L233.3 1191.3 L224.3 1187.1 L215.4 1182.7 L206.5 1178.3 L197.7 1173.8 L188.9 1169.3 L180.1 1164.6 L171.3 1159.8 L162.6 1154.9 L153.9 1149.9 L145.2 1144.8 L136.7 1139.6 L128.3 1134.1 L120.2 1128.3 L112.4 1122.2 L104.9 1115.8 L98.0 1108.9 L91.6 1101.6 L86.8 1093.3 L85.5 1083.4 Z"/></clipPath>
</defs>
<g clip-path="url(#bclip)">
<path d="M85.5 890.0 L86.6 879.9 L91.1 871.6 L97.7 864.4 L105.2 857.9 L113.0 851.6 L120.9 845.6 L129.0 839.8 L137.2 834.1 L145.5 828.7 L154.0 823.4 L162.5 818.3 L171.1 813.3 L179.8 808.5 L188.5 803.8 L197.3 799.2 L206.2 794.7 L215.1 790.3 L224.0 786.0 L233.0 781.8 L242.0 777.7 L251.1 773.7 L260.1 769.7 L269.3 765.8 L278.4 762.0 L287.6 758.3 L296.8 754.6 L306.0 751.0 L315.2 747.4 L324.5 743.8 L333.8 740.3 L343.1 736.9 L352.4 733.5 L361.7 730.1 L371.1 726.7 L380.4 723.4 L389.8 720.1 L399.2 716.9 L408.6 713.6 L418.0 710.5 L427.4 707.3 L436.9 704.2 L446.3 701.2 L455.8 698.2 L465.3 695.2 L474.8 692.3 L484.3 689.4 L493.8 686.6 L503.3 683.8 L512.9 681.1 L522.4 678.5 L532.0 675.8 L541.6 673.3 L551.2 670.8 L560.8 668.3 L570.4 665.9 L580.0 663.5 L589.6 661.1 L599.3 658.8 L608.9 656.6 L618.6 654.4 L628.3 652.2 L638.0 650.0 L647.6 647.9 L657.3 645.8 L667.0 643.8 L676.7 641.7 L686.5 639.7 L696.2 637.8 L705.9 635.8 L715.6 633.9 L725.4 632.0 L735.1 630.1 L744.9 628.2 L754.6 626.4 L764.4 624.6 L774.2 622.8 L783.9 621.0 L793.7 619.3 L803.5 617.6 L813.3 615.9 L823.1 614.2 L832.9 612.6 L842.6 611.0 L852.4 609.4 L862.3 607.8 L872.1 606.3 L881.9 604.8 L891.7 603.3 L901.5 601.8 L911.3 600.4 L921.2 599.0 L931.0 597.7 L940.8 596.3 L950.7 595.0 L960.5 593.7 L970.4 592.5 L980.2 591.2 L990.1 590.0 L999.9 588.9 L1009.8 587.7 L1019.6 586.6 L1029.5 585.5 L1039.3 584.5 L1049.2 583.5 L1059.1 582.4 L1069.0 581.5 L1078.8 580.5 L1088.7 579.6 L1098.6 578.7 L1108.5 577.8 L1118.3 577.0 L1128.2 576.2 L1138.1 575.4 L1148.0 574.6 L1157.9 573.9 L1167.8 573.2 L1177.7 572.5 L1187.6 571.8 L1197.5 571.1 L1207.4 570.5 L1217.3 569.9 L1227.2 569.4 L1237.1 568.8 L1247.0 568.3 L1256.9 567.8 L1266.8 567.3 L1276.7 566.8 L1286.6 566.4 L1296.5 566.0 L1306.5 565.6 L1316.4 565.2 L1326.3 564.9 L1336.2 564.6 L1346.1 564.3 L1356.1 564.0 L1366.0 563.7 L1375.9 563.5 L1385.8 563.3 L1395.7 563.1 L1405.7 562.9 L1415.6 562.7 L1425.5 562.6 L1435.4 562.5 L1445.4 562.4 L1455.3 562.3 L1465.2 562.2 L1475.1 562.2 L1485.1 562.2 L1495.0 562.2 L1504.9 562.2 L1514.8 562.2 L1524.8 562.3 L1534.7 562.3 L1544.6 562.4 L1554.5 562.5 L1564.5 562.6 L1574.4 562.8 L1584.3 562.9 L1594.2 563.1 L1604.2 563.3 L1614.1 563.5 L1624.0 563.7 L1633.9 563.9 L1643.9 564.2 L1653.8 564.5 L1663.7 564.8 L1673.6 565.1 L1683.5 565.4 L1693.5 565.8 L1703.4 566.2 L1713.3 566.6 L1723.2 567.0 L1733.1 567.5 L1743.0 567.9 L1752.9 568.4 L1762.8 568.9 L1772.8 569.4 L1782.7 570.0 L1792.6 570.6 L1802.5 571.2 L1812.4 571.8 L1822.3 572.4 L1832.2 573.1 L1842.1 573.8 L1852.0 574.5 L1861.9 575.3 L1871.7 576.0 L1881.6 576.8 L1891.5 577.7 L1901.4 578.5 L1911.3 579.4 L1921.2 580.3 L1931.0 581.2 L1940.9 582.1 L1950.8 583.1 L1960.7 584.1 L1970.5 585.1 L1980.4 586.2 L1990.3 587.3 L2000.1 588.4 L2010.0 589.5 L2019.8 590.6 L2029.7 591.8 L2039.5 593.0 L2049.4 594.2 L2059.2 595.4 L2069.1 596.7 L2078.9 598.0 L2088.8 599.2 L2098.6 600.6 L2108.4 601.9 L2118.3 603.2 L2128.1 604.6 L2137.9 606.0 L2147.8 607.4 L2157.6 608.8 L2167.4 610.3 L2177.2 611.7 L2187.0 613.2 L2196.8 614.7 L2206.7 616.2 L2216.5 617.7 L2226.3 619.3 L2236.1 620.8 L2245.9 622.4 L2255.7 624.0 L2265.4 625.7 L2275.2 627.3 L2285.0 629.0 L2294.8 630.7 L2304.5 632.5 L2314.3 634.2 L2324.0 636.0 L2333.8 637.9 L2343.5 639.8 L2353.3 641.7 L2363.0 643.6 L2372.7 645.6 L2382.4 647.6 L2392.1 649.6 L2401.8 651.7 L2411.5 653.9 L2421.2 656.1 L2430.8 658.3 L2440.5 660.5 L2450.1 662.8 L2459.8 665.2 L2469.4 667.6 L2479.0 670.1 L2488.6 672.6 L2498.2 675.1 L2507.8 677.7 L2517.4 680.4 L2527.0 683.1 L2536.5 685.9 L2546.0 688.7 L2555.6 691.6 L2565.1 694.5 L2574.6 697.5 L2584.0 700.6 L2593.5 703.8 L2602.9 707.1 L2612.2 710.5 L2621.4 714.1 L2630.6 717.8 L2639.7 721.7 L2648.7 725.8 L2657.6 730.1 L2666.3 734.6 L2675.0 739.4 L2683.4 744.4 L2691.8 749.7 L2699.9 755.3 L2707.9 761.2 L2715.7 767.4 L2723.2 773.9 L2730.6 780.8 L2737.6 787.9 L2744.3 795.4 L2750.6 803.1 L2756.5 811.1 L2762.0 819.4 L2767.0 827.9 L2771.4 836.7 L2775.4 845.7 L2779.0 854.9 L2782.1 864.3 L2784.9 873.8 L2787.3 883.4 L2789.4 893.1 L2791.3 902.9 L2792.9 912.7 L2794.4 922.5 L2795.7 932.4 L2796.9 942.3 L2798.0 952.2 L2799.1 962.0 L2800.3 971.9 L2801.1 981.8 L2801.3 991.6 L2800.7 1001.5 L2799.7 1011.3 L2798.3 1021.1 L2796.7 1031.0 L2795.1 1040.8 L2793.7 1050.7 L2792.4 1060.7 L2791.1 1070.5 L2789.5 1080.4 L2787.7 1090.1 L2785.4 1099.7 L2782.7 1109.2 L2779.4 1118.6 L2775.7 1127.7 L2771.4 1136.7 L2766.8 1145.4 L2761.7 1153.9 L2756.2 1162.2 L2750.3 1170.2 L2744.1 1177.9 L2737.5 1185.4 L2730.6 1192.5 L2723.4 1199.4 L2715.9 1206.0 L2708.2 1212.3 L2700.2 1218.3 L2692.1 1223.9 L2683.7 1229.3 L2675.2 1234.4 L2666.5 1239.2 L2657.7 1243.7 L2648.7 1247.9 L2639.7 1251.9 L2630.5 1255.6 L2621.3 1259.2 L2612.0 1262.6 L2602.6 1265.9 L2593.2 1269.1 L2583.8 1272.2 L2574.3 1275.3 L2564.8 1278.3 L2555.3 1281.4 L2545.9 1284.4 L2536.4 1287.4 L2526.9 1290.3 L2517.4 1293.2 L2507.9 1296.0 L2498.3 1298.7 L2488.8 1301.4 L2479.2 1303.9 L2469.6 1306.3 L2460.0 1308.7 L2450.3 1311.0 L2440.7 1313.3 L2431.0 1315.4 L2421.3 1317.6 L2411.6 1319.6 L2401.9 1321.7 L2392.2 1323.6 L2382.5 1325.6 L2372.7 1327.5 L2363.0 1329.4 L2353.2 1331.3 L2343.5 1333.1 L2333.7 1335.0 L2324.0 1336.8 L2314.2 1338.6 L2304.4 1340.4 L2294.7 1342.1 L2284.9 1343.9 L2275.1 1345.6 L2265.4 1347.4 L2255.6 1349.1 L2245.8 1350.7 L2236.0 1352.4 L2226.2 1354.0 L2216.4 1355.7 L2206.6 1357.3 L2196.8 1358.8 L2187.0 1360.4 L2177.2 1361.9 L2167.4 1363.4 L2157.6 1364.9 L2147.8 1366.4 L2137.9 1367.8 L2128.1 1369.2 L2118.3 1370.6 L2108.5 1372.0 L2098.6 1373.3 L2088.8 1374.6 L2079.0 1375.9 L2069.1 1377.1 L2059.3 1378.4 L2049.4 1379.6 L2039.6 1380.7 L2029.7 1381.9 L2019.9 1383.0 L2010.0 1384.1 L2000.1 1385.2 L1990.3 1386.2 L1980.4 1387.3 L1970.6 1388.3 L1960.7 1389.3 L1950.8 1390.2 L1940.9 1391.1 L1931.1 1392.1 L1921.2 1392.9 L1911.3 1393.8 L1901.4 1394.7 L1891.5 1395.5 L1881.6 1396.3 L1871.7 1397.0 L1861.9 1397.8 L1852.0 1398.5 L1842.1 1399.3 L1832.2 1399.9 L1822.3 1400.6 L1812.4 1401.3 L1802.5 1401.9 L1792.6 1402.5 L1782.6 1403.1 L1772.7 1403.7 L1762.8 1404.2 L1752.9 1404.8 L1743.0 1405.3 L1733.1 1405.8 L1723.2 1406.2 L1713.3 1406.7 L1703.4 1407.1 L1693.4 1407.5 L1683.5 1407.9 L1673.6 1408.3 L1663.7 1408.6 L1653.8 1408.9 L1643.8 1409.3 L1633.9 1409.5 L1624.0 1409.8 L1614.1 1410.1 L1604.1 1410.3 L1594.2 1410.5 L1584.3 1410.7 L1574.4 1410.9 L1564.4 1411.0 L1554.5 1411.2 L1544.6 1411.3 L1534.7 1411.4 L1524.7 1411.4 L1514.8 1411.5 L1504.9 1411.5 L1495.0 1411.5 L1485.0 1411.5 L1475.1 1411.5 L1465.2 1411.4 L1455.3 1411.4 L1445.3 1411.3 L1435.4 1411.2 L1425.5 1411.1 L1415.6 1410.9 L1405.7 1410.7 L1395.7 1410.5 L1385.8 1410.3 L1375.9 1410.1 L1366.0 1409.8 L1356.1 1409.5 L1346.1 1409.2 L1336.2 1408.9 L1326.3 1408.6 L1316.4 1408.2 L1306.5 1407.8 L1296.6 1407.4 L1286.7 1407.0 L1276.7 1406.5 L1266.8 1406.1 L1256.9 1405.5 L1247.0 1405.0 L1237.1 1404.5 L1227.2 1403.9 L1217.3 1403.3 L1207.4 1402.7 L1197.5 1402.1 L1187.6 1401.4 L1177.7 1400.7 L1167.8 1400.0 L1157.9 1399.3 L1148.0 1398.5 L1138.2 1397.7 L1128.3 1396.9 L1118.4 1396.1 L1108.5 1395.3 L1098.6 1394.4 L1088.7 1393.5 L1078.9 1392.5 L1069.0 1391.6 L1059.1 1390.6 L1049.3 1389.6 L1039.4 1388.6 L1029.5 1387.5 L1019.7 1386.5 L1009.8 1385.4 L999.9 1384.2 L990.1 1383.1 L980.2 1381.9 L970.4 1380.7 L960.5 1379.5 L950.7 1378.2 L940.9 1376.9 L931.0 1375.6 L921.2 1374.3 L911.4 1372.9 L901.5 1371.5 L891.7 1370.1 L881.9 1368.7 L872.1 1367.2 L862.2 1365.7 L852.4 1364.2 L842.6 1362.7 L832.8 1361.1 L823.0 1359.5 L813.2 1357.8 L803.4 1356.2 L793.6 1354.5 L783.9 1352.8 L774.1 1351.0 L764.3 1349.2 L754.5 1347.4 L744.8 1345.6 L735.0 1343.7 L725.3 1341.8 L715.5 1339.9 L705.8 1338.0 L696.1 1336.0 L686.4 1333.9 L676.7 1331.9 L667.0 1329.8 L657.3 1327.7 L647.6 1325.5 L637.9 1323.4 L628.3 1321.1 L618.6 1318.9 L609.0 1316.6 L599.3 1314.3 L589.7 1311.9 L580.1 1309.5 L570.5 1307.1 L560.9 1304.6 L551.3 1302.1 L541.7 1299.6 L532.2 1297.0 L522.6 1294.4 L513.1 1291.8 L503.5 1289.1 L494.0 1286.3 L484.5 1283.6 L474.9 1280.8 L465.4 1277.9 L455.9 1275.0 L446.4 1272.1 L436.9 1269.1 L427.5 1266.1 L418.0 1263.1 L408.5 1260.0 L399.1 1256.8 L389.7 1253.6 L380.3 1250.4 L370.9 1247.1 L361.5 1243.7 L352.2 1240.4 L342.9 1236.9 L333.6 1233.4 L324.3 1229.9 L315.1 1226.3 L305.8 1222.7 L296.7 1219.0 L287.5 1215.2 L278.4 1211.4 L269.3 1207.5 L260.2 1203.6 L251.2 1199.5 L242.2 1195.5 L233.3 1191.3 L224.3 1187.1 L215.4 1182.7 L206.5 1178.3 L197.7 1173.8 L188.9 1169.3 L180.1 1164.6 L171.3 1159.8 L162.6 1154.9 L153.9 1149.9 L145.2 1144.8 L136.7 1139.6 L128.3 1134.1 L120.2 1128.3 L112.4 1122.2 L104.9 1115.8 L98.0 1108.9 L91.6 1101.6 L86.8 1093.3 L85.5 1083.4 Z" fill="url(#bg)" filter="url(#shade)"/>
<rect x="85" y="985.5" width="2720" height="2.4" fill="#8a0a00"/>
<path d="M155.0 822.0 L154.8 830.4 L154.7 838.9 L154.4 847.3 L154.2 855.7 L154.0 864.2 L153.8 872.6 L153.5 881.0 L153.3 889.5 L153.1 897.9 L152.8 906.4 L152.6 914.8 L152.4 923.2 L152.2 931.7 L152.0 940.1 L151.9 948.5 L151.7 957.0 L151.6 965.4 L151.5 973.8 L151.5 982.3 L151.5 990.7 L151.5 999.2 L151.6 1007.6 L151.7 1016.0 L151.8 1024.5 L152.0 1032.9 L152.2 1041.3 L152.4 1049.8 L152.6 1058.2 L152.8 1066.6 L153.0 1075.1 L153.3 1083.5 L153.5 1092.0 L153.7 1100.4 L154.0 1108.8 L154.2 1117.3 L154.4 1125.7 L154.6 1134.1 L154.8 1142.6 L155.0 1151.0" fill="none" stroke="#960f00" stroke-width="2.4"/><path d="M703.0 636.5 L701.8 654.4 L700.8 672.4 L700.0 690.3 L699.4 708.3 L698.8 726.2 L698.4 744.2 L698.1 762.2 L697.9 780.1 L697.8 798.1 L697.7 816.1 L697.6 834.0 L697.5 852.0 L697.4 870.0 L697.3 887.9 L697.2 905.9 L697.2 923.9 L697.1 941.8 L697.0 959.8 L697.0 977.8 L697.0 995.7 L697.0 1013.7 L697.1 1031.7 L697.2 1049.6 L697.2 1067.6 L697.3 1085.6 L697.4 1103.5 L697.5 1121.5 L697.6 1139.5 L697.6 1157.4 L697.8 1175.4 L697.9 1193.4 L698.1 1211.3 L698.4 1229.3 L698.8 1247.3 L699.3 1265.2 L700.0 1283.2 L700.8 1301.1 L701.8 1319.1 L703.0 1337.0" fill="none" stroke="#960f00" stroke-width="2.4"/><path d="M1927.5 581.0 L1928.1 601.8 L1928.6 622.6 L1929.1 643.4 L1929.6 664.3 L1930.1 685.1 L1930.5 705.9 L1930.9 726.7 L1931.2 747.5 L1931.6 768.4 L1931.9 789.2 L1932.1 810.0 L1932.3 830.8 L1932.5 851.6 L1932.7 872.5 L1932.8 893.3 L1932.9 914.1 L1932.9 934.9 L1933.0 955.8 L1933.0 976.6 L1933.0 997.4 L1933.0 1018.2 L1932.9 1039.1 L1932.9 1059.9 L1932.8 1080.7 L1932.7 1101.5 L1932.5 1122.4 L1932.3 1143.2 L1932.1 1164.0 L1931.9 1184.8 L1931.6 1205.6 L1931.2 1226.5 L1930.9 1247.3 L1930.5 1268.1 L1930.1 1288.9 L1929.6 1309.7 L1929.1 1330.6 L1928.6 1351.4 L1928.1 1372.2 L1927.5 1393.0" fill="none" stroke="#960f00" stroke-width="2.4"/><path d="M2739.4 789.0 L2739.8 799.2 L2740.1 809.3 L2740.4 819.5 L2740.6 829.6 L2740.8 839.8 L2741.0 849.9 L2741.1 860.1 L2741.3 870.2 L2741.4 880.4 L2741.5 890.5 L2741.5 900.7 L2741.6 910.8 L2741.6 921.0 L2741.6 931.1 L2741.6 941.3 L2741.6 951.5 L2741.6 961.6 L2741.6 971.8 L2741.6 981.9 L2741.6 992.1 L2741.6 1002.2 L2741.6 1012.4 L2741.6 1022.5 L2741.6 1032.7 L2741.6 1042.9 L2741.6 1053.0 L2741.6 1063.2 L2741.5 1073.3 L2741.5 1083.5 L2741.4 1093.6 L2741.3 1103.8 L2741.1 1113.9 L2741.0 1124.1 L2740.8 1134.2 L2740.6 1144.4 L2740.4 1154.5 L2740.1 1164.7 L2739.8 1174.8 L2739.4 1185.0" fill="none" stroke="#960f00" stroke-width="2.4"/>
</g>
</svg>
<div class="a" style="left:398px;top:232px;width:100px;height:38px;border:2px solid #000;background:#fdfde6"></div>
<div class="t" style="left:404px;top:243px;font-size:22px;color:#4a4a40">Top view</div>
<div class="a" style="left:0;top:1760px;width:2880px;height:40px;background:#f8f9fc"></div>
<div class="a" style="left:0;top:1760px;width:2880px;height:2px;background:#ecebe4"></div>
<div class="t" style="left:6px;top:1775px;font-size:22px;color:#4e4e4e">Press F1 for help</div>
<div class="a" style="left:2067px;top:1768px;width:50px;height:40px;border-top:2px solid #9a9aa2;border-left:2px solid #9a9aa2;background:#f8f9fc"></div>
<div class="t" style="left:2076px;top:1775px;font-size:22px;color:#4e4e4e">cm</div>
<div class="a" style="left:2123px;top:1768px;width:141px;height:40px;border-top:2px solid #9a9aa2;border-left:2px solid #9a9aa2;background:#f8f9fc"></div>
<div class="t" style="left:2132px;top:1775px;font-size:22px;color:#4e4e4e">X: 52.5</div>
<div class="a" style="left:2270px;top:1768px;width:140px;height:40px;border-top:2px solid #9a9aa2;border-left:2px solid #9a9aa2;background:#f8f9fc"></div>
<div class="t" style="left:2279px;top:1775px;font-size:22px;color:#4e4e4e">Y: 44.8</div>
<div class="a" style="left:2416px;top:1768px;width:140px;height:40px;border-top:2px solid #9a9aa2;border-left:2px solid #9a9aa2;background:#f8f9fc"></div>
<div class="t" style="left:2425px;top:1775px;font-size:22px;color:#4e4e4e">Z: 0.0</div>
<div class="a" style="left:2562px;top:1768px;width:110px;height:40px;border-top:2px solid #9a9aa2;border-left:2px solid #9a9aa2;background:#f8f9fc"></div>
<div class="a" style="left:2678px;top:1768px;width:110px;height:40px;border-top:2px solid #9a9aa2;border-left:2px solid #9a9aa2;background:#f8f9fc"></div>
<div class="a" style="left:2795px;top:1768px;width:47px;height:40px;border-top:2px solid #9a9aa2;border-left:2px solid #9a9aa2;background:#f8f9fc"></div>
<svg class="a" style="left:2850px;top:1772px" width="30" height="28" viewBox="0 0 30 28"><path d="M6 25.5 L27.5 4 M14 25.5 L27.5 12 M22 25.5 L27.5 20" stroke="#8a8a8a" stroke-width="2.4" stroke-dasharray="2.2 0.8"/></svg>
<svg class="a" style="left:0;top:1780px" width="20" height="20" viewBox="0 0 20 20"><path d="M0 14 Q1 19 7 20 L0 20Z" fill="#000"/></svg>
<svg class="a" style="left:2860px;top:1780px" width="20" height="20" viewBox="0 0 20 20"><path d="M20 3 Q19 16 10 20 L20 20Z" fill="#000"/></svg>
</body></html>
